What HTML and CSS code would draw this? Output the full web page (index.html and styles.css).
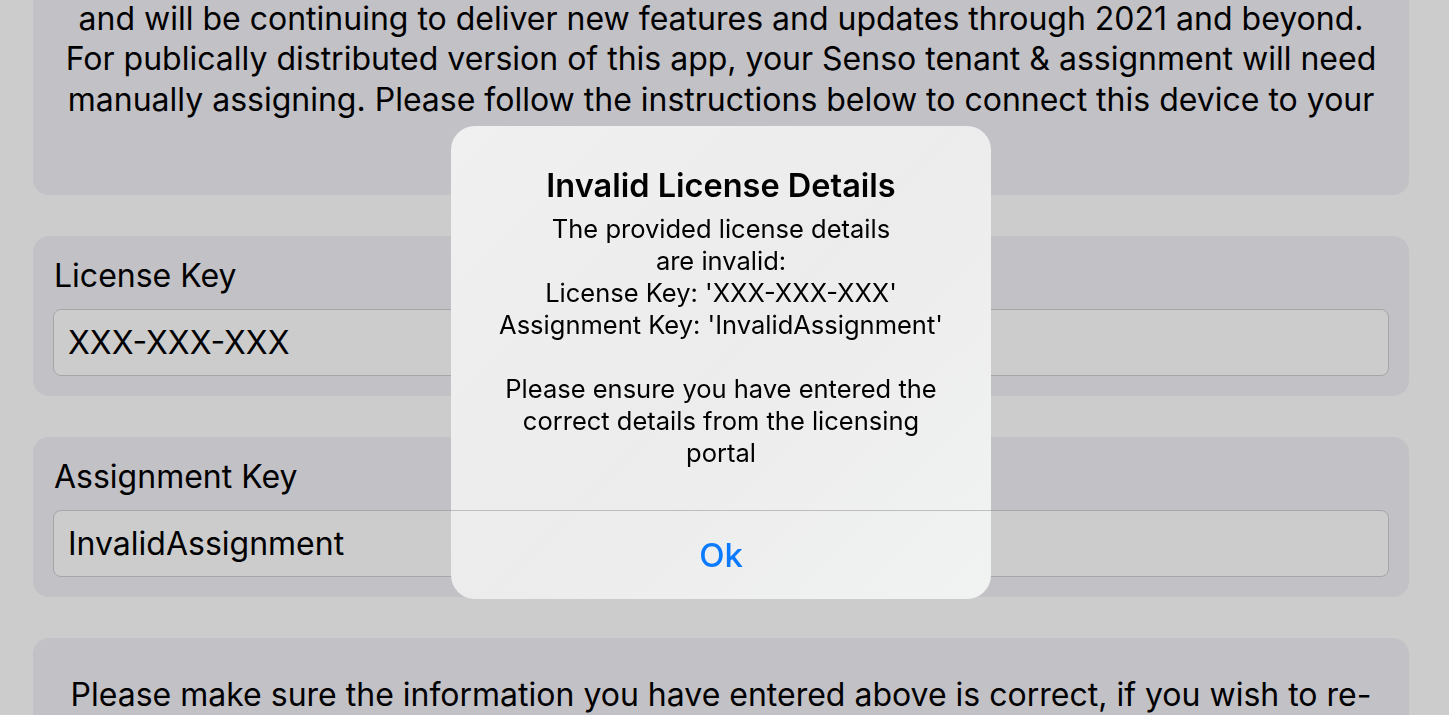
FILE: index.html
```html
<!DOCTYPE html>
<html>
<head>
<meta charset="utf-8">
<link rel="stylesheet" href="styles.css">
</head>
<body>
<main class="page">
  <section class="card card-intro">
    <p class="intro">Senso Connect is currently in active development<br>and will be continuing to deliver new features and updates through 2021 and beyond.<br>For publically distributed version of this app, your Senso tenant &amp; assignment will need<br>manually assigning. Please follow the instructions below to connect this device to your<br>Senso tenant.</p>
  </section>
  <section class="card">
    <label class="field-label">License Key</label>
    <div class="input">XXX-XXX-XXX</div>
  </section>
  <section class="card">
    <label class="field-label">Assignment Key</label>
    <div class="input">InvalidAssignment</div>
  </section>
  <section class="card card-note">
    <p class="note">Please make sure the information you have entered above is correct, if you wish to re-<br>enter your details, please tap the button below.</p>
  </section>
</main>
<div class="alert">
  <div class="alert-body">
    <h1 class="alert-title">Invalid License Details</h1>
    <p class="alert-msg">The provided license details<br>are invalid:<br>License Key: 'XXX-XXX-XXX'<br>Assignment Key: 'InvalidAssignment'<br><br>Please ensure you have entered the<br>correct details from the licensing<br>portal</p>
  </div>
  <div class="alert-actions">
    <button class="alert-btn">Ok</button>
  </div>
</div>
</body>
</html>
```

FILE: styles.css
```css
html, body {
  margin: 0;
  padding: 0;
  height: 100%;
  overflow: hidden;
}
body {
  background: #cccccc;
  font-family: Inter, "Noto Sans", sans-serif;
  color: #000;
}
.page {
  display: flex;
  flex-direction: column;
  gap: 41px;
  padding: 0 40px 0 33px;
  margin-top: -63px;
}
.card {
  background: #c2c1c6;
  border-radius: 16px;
  padding: 20px 20px;
  display: flex;
  flex-direction: column;
}
.intro {
  margin: 0;
  padding: 1px 0 14.5px;
  text-align: center;
  font-size: 32px;
  line-height: 40.5px;
  white-space: nowrap;
}
.field-label {
  font-size: 32px;
  line-height: 40px;
  margin: 0 0 13px 1px;
}
.input {
  height: 65px;
  border: 1px solid #a6a6a9;
  border-radius: 8px;
  background: #cccccc;
  padding-left: 14px;
  font-size: 32px;
  line-height: 65px;
}
.card-note {
  padding-top: 37px;
}
.note {
  margin: 0;
  text-align: center;
  font-size: 32px;
  line-height: 40px;
  white-space: nowrap;
}
.alert {
  position: fixed;
  left: 451px;
  top: 126px;
  width: 540px;
  height: 473px;
  border-radius: 24px;
  background: linear-gradient(135deg, #f0f0f0, #ececec 50%, #f1f2f2);
  display: flex;
  flex-direction: column;
  overflow: hidden;
}
.alert-body {
  flex: 1;
  padding: 42px 10px 0;
  text-align: center;
}
.alert-title {
  margin: 0 0 9px;
  font-size: 32.5px;
  line-height: 36px;
  font-weight: 600;
}
.alert-msg {
  margin: 0;
  font-size: 25.5px;
  line-height: 32px;
}
.alert-actions {
  height: 88px;
  border-top: 1px solid #bdbdbd;
  display: flex;
}
.alert-btn {
  flex: 1;
  border: 0;
  background: transparent;
  font-family: Inter, "Noto Sans", sans-serif;
  font-size: 33px;
  font-weight: 500;
  color: #0a7aff;
  padding: 0;
}
```
